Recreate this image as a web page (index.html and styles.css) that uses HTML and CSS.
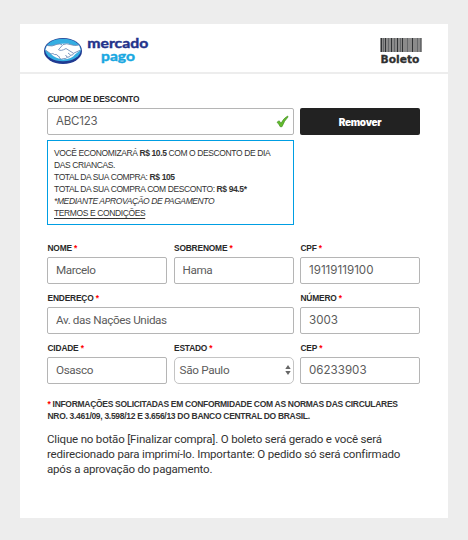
FILE: index.html
```html
<!DOCTYPE html>
<html lang="pt-BR">
<head>
<meta charset="utf-8">
<title>Mercado Pago - Boleto</title>
<link rel="stylesheet" href="styles.css">
</head>
<body>
<main class="card">
  <header class="header">
    <svg class="logo" width="106" height="30" viewBox="0 0 106 30">
      <ellipse cx="19" cy="14" rx="19" ry="13" fill="#203a91"/>
      <ellipse cx="19" cy="13" rx="17.8" ry="11.3" fill="#35aee2"/>
      <path d="M3 8.5Q8 10 13 7.3L18 6.8L24 6.5Q30 9.3 35 8L36.6 13L31 17.5Q28 22 19 22.4Q11 21.5 7 17L1.3 13Z" fill="#fff"/>
      <path d="M3 8.5Q8 10 13 7.3Q16 6.5 18 7.6M1.5 13L7 17Q9 15.8 10.5 17.5Q13.5 17 13.8 19Q16 19.3 15.5 21.3Q18 23 19.5 21.5Q22.5 22.5 23 20.2Q26 20.5 26.5 18.3Q29.5 18.3 29.5 16.3L22 11.5Q17 14.5 14.5 12.7L19 7.6Q23 6 26 7.5Q31 9.3 35 8M29.5 16.3L36.5 13M21.5 18L23 20M24 16L26.5 18" fill="none" stroke="#6f8db8" stroke-width=".9"/>
      <text class="brand brand-top" x="43.3" y="11.3" textLength="61" lengthAdjust="spacingAndGlyphs">mercado</text>
      <text class="brand brand-bottom" x="57" y="24" textLength="34" lengthAdjust="spacingAndGlyphs">pago</text>
    </svg>
    <svg class="barcode" width="42" height="28" viewBox="0 0 42 28">
      <path fill="#8b8b8b" d="M0 1h42v14H0z"/>
      <path stroke="#303234" d="M1.5 1v14M5.5 1v14M11.5 1v14M17.5 1v14M22.5 1v14M32.5 1v14"/>
      <path stroke="#66686a" d="M3.5 1v14M8.5 1v14M14.5 1v14M20.5 1v14M27.5 1v14M37.5 1v14M40.5 1v14"/>
      <text class="barcode-name" x="0.5" y="26" textLength="39" lengthAdjust="spacingAndGlyphs">Boleto</text>
    </svg>
  </header>
  <form class="form">
    <label class="label" for="cupom">CUPOM DE DESCONTO</label>
    <div class="row">
      <div class="field wide coupon">
        <input class="input code" id="cupom" value="ABC123">
        <svg class="check" width="13" height="13" viewBox="0 0 13 13"><path d="M1 7.2L3.2 5.8L5 8.3Q7.5 3.2 11.7 1L12 2Q8.2 5.7 6 11.7H4.2Q3 9 1 7.2Z" fill="#63bd2c" stroke="#47922a" stroke-width=".7"/></svg>
      </div>
      <button class="button" type="button">Remover</button>
    </div>
    <section class="discount">
      VOCÊ ECONOMIZARÁ <b>R$ 10.5</b> COM O DESCONTO DE DIA<br>DAS CRIANCAS.<br>
      TOTAL DA SUA COMPRA: <b>R$ 105</b><br>
      TOTAL DA SUA COMPRA COM DESCONTO: <b>R$ 94.5*</b><br>
      <i>*MEDIANTE APROVAÇÃO DE PAGAMENTO</i><br>
      <a class="terms">TERMOS E CONDIÇÕES</a>
    </section>
    <div class="row person">
      <div class="field"><label class="label" for="nome">NOME <em>*</em></label><input class="input" id="nome" value="Marcelo"></div>
      <div class="field"><label class="label" for="sobrenome">SOBRENOME <em>*</em></label><input class="input" id="sobrenome" value="Hama"></div>
      <div class="field"><label class="label" for="cpf">CPF <em>*</em></label><input class="input digits" id="cpf" value="19119119100"></div>
    </div>
    <div class="row address">
      <div class="field wide"><label class="label" for="endereco">ENDEREÇO <em>*</em></label><input class="input" id="endereco" value="Av. das Nações Unidas"></div>
      <div class="field"><label class="label" for="numero">NÚMERO <em>*</em></label><input class="input digits" id="numero" value="3003"></div>
    </div>
    <div class="row address">
      <div class="field"><label class="label" for="cidade">CIDADE <em>*</em></label><input class="input" id="cidade" value="Osasco"></div>
      <div class="field"><span class="label">ESTADO <em>*</em></span>
        <div class="select"><span>São Paulo</span><svg width="6" height="10" viewBox="0 0 6 10"><path d="M3 0L5.7 4H.3ZM.3 6H5.7L3 10Z" fill="#666"/></svg></div>
      </div>
      <div class="field"><label class="label" for="cep">CEP <em>*</em></label><input class="input digits" id="cep" value="06233903"></div>
    </div>
    <p class="legal"><em>*</em> INFORMAÇÕES SOLICITADAS EM CONFORMIDADE COM AS NORMAS DAS CIRCULARES<br>NRO. 3.461/09, 3.598/12 E 3.656/13 DO BANCO CENTRAL DO BRASIL.</p>
    <p class="note">Clique no botão [Finalizar compra]. O boleto será gerado e você será<br>redirecionado para imprimí-lo. Importante: O pedido só será confirmado<br>após a aprovação do pagamento.</p>
  </form>
</main>
</body>
</html>
```
FILE: styles.css
```css
* { box-sizing: border-box; }
body { margin: 0; padding: 24px 20px 22px; background: #ededed; color: #333; font-family: "Liberation Sans", Arial, sans-serif; }
.card { height: 494px; background: #fff; }
.header { display: flex; justify-content: space-between; height: 50px; padding: 13px 26px 0 24px; border-bottom: 2px solid #ededed; }
.logo { overflow: visible; }
.brand { font-family: Lato, sans-serif; font-weight: 700; font-size: 13px; stroke-width: .4px; }
.brand-top { fill: #23328a; stroke: #23328a; }
.brand-bottom { fill: #19a7e1; stroke: #19a7e1; }
.barcode-name { font: bold 11px "DejaVu Sans", sans-serif; fill: #303030; stroke: #303030; stroke-width: .3px; }
.form { padding: 20px 28px 0 27px; }
.label { display: block; height: 14px; padding: 0 0 0 .5px; font-size: 8.4px; line-height: 10px; font-weight: bold; letter-spacing: -.18px; white-space: nowrap; color: #292929; }
.label em, .legal em { color: #f00; font-style: normal; }
.row { display: grid; grid-template-columns: 120px 120px 120px; column-gap: 6.5px; }
.field { min-width: 0; }
.wide { grid-column: span 2; }
.input { display: block; width: 100%; height: 27px; padding: 0 8px 1px; border: 1px solid #b5b5b5; border-radius: 2px; background: #fff; color: #5c5c5c; font: 11.7px/24px Roboto, sans-serif; letter-spacing: -.38px; outline: 0; }
.digits { font: 11.6px/24px Inter, sans-serif; letter-spacing: 0; }
.code { font: 11.5px/24px Inter, sans-serif; letter-spacing: -.2px; }
.coupon { position: relative; }
.check { position: absolute; right: 5px; top: 7px; }
.button { height: 27px; padding: 1px 0 0; border: 0; border-radius: 2px; background: #222; color: #fff; font: 900 10px Inter, sans-serif; letter-spacing: -.3px; }
.discount { width: 247px; height: 85px; margin-top: 5px; padding: 6px 0 0 6px; border: 1px solid #009ee3; font-size: 8.5px; line-height: 12px; letter-spacing: -.39px; white-space: nowrap; }
.terms { text-decoration: underline; text-underline-offset: 2px; }
.person { margin-top: 18px; }
.address { margin-top: 9px; }
.select { display: flex; align-items: center; justify-content: space-between; height: 27px; padding: 0 2px 1px 5px; border: 1px solid #c4c4c4; border-radius: 5px; color: #5c5c5c; font: 11.7px Roboto, sans-serif; letter-spacing: -.3px; }
.legal { margin: 14px 0 0; padding-left: .5px; font-size: 8.5px; line-height: 12px; letter-spacing: -.3px; font-weight: bold; white-space: nowrap; }
.note { margin: 10px 0 0; font: 11.5px/15px Roboto, sans-serif; letter-spacing: -.18px; white-space: nowrap; }
```
